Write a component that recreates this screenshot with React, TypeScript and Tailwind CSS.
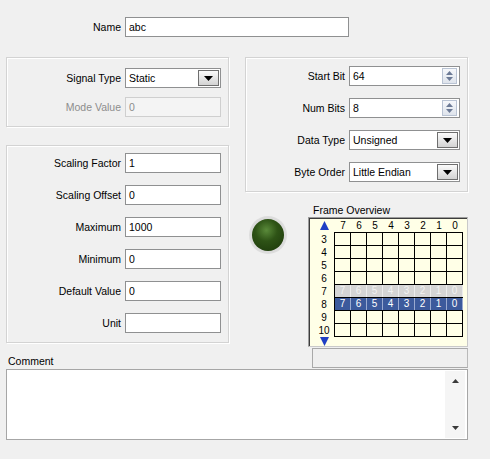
import React from "react";

const cols = [7, 6, 5, 4, 3, 2, 1, 0];
const rows = [3, 4, 5, 6, 7, 8, 9, 10];

function DownTri({ color = "#000" }: { color?: string }) {
  return (
    <svg width="9" height="5" viewBox="0 0 9 5">
      <path d="M0 0H9L4.5 5Z" fill={color} />
    </svg>
  );
}

function TextBox({ value, w, disabled }: { value: string; w: string; disabled?: boolean }) {
  return (
    <div
      className={`${w} h-[20px] flex items-center pl-[3px] border ${
        disabled ? "border-[#cfcfcf] bg-[#f4f4f4] text-[#8d8d8d]" : "border-[#8f9091] bg-white text-black"
      }`}
    >
      {value}
    </div>
  );
}

function Combo({ value, w }: { value: string; w: string }) {
  return (
    <div className={`${w} h-[20px] flex items-stretch border border-[#8f9091] bg-white p-[1px]`}>
      <div className="flex-1 flex items-center pl-[2px]">{value}</div>
      <div className="w-[21px] border border-[#6e6e6e] bg-gradient-to-b from-[#fbfbfb] to-[#d3d3d3] flex items-center justify-center">
        <DownTri />
      </div>
    </div>
  );
}

function Spinner({ value, w }: { value: string; w: string }) {
  return (
    <div className={`${w} h-[20px] flex items-stretch border border-[#8f9091] bg-white p-[1px]`}>
      <div className="flex-1 flex items-center pl-[2px]">{value}</div>
      <div className="w-[15px] mr-[1px] border border-[#b9c3d3] bg-gradient-to-b from-[#f6f8fb] to-[#dfe4ec] flex flex-col items-center justify-center gap-[2px]">
        <svg width="7" height="4" viewBox="0 0 7 4">
          <path d="M0 4H7L3.5 0Z" fill="#6c7a96" />
        </svg>
        <svg width="7" height="4" viewBox="0 0 7 4">
          <path d="M0 0H7L3.5 4Z" fill="#6c7a96" />
        </svg>
      </div>
    </div>
  );
}

function LeftRow({ label, children, disabled }: { label: string; children: React.ReactNode; disabled?: boolean }) {
  return (
    <div className="flex items-center">
      <div className={`w-[114px] text-right ${disabled ? "text-[#8d8d8d]" : "text-black"}`}>{label}</div>
      <div className="ml-[4px]">{children}</div>
    </div>
  );
}

function RightRow({ label, children }: { label: string; children: React.ReactNode }) {
  return (
    <div className="flex items-center">
      <div className="w-[99px] text-right">{label}</div>
      <div className="ml-[4px]">{children}</div>
    </div>
  );
}

const etched = "border border-[#d3d3d3] shadow-[inset_1px_1px_0_#ffffff,1px_1px_0_#ffffff]";

function FrameGrid() {
  return (
    <div className="w-[160px] h-[130px] border border-[#9c9c9c] border-r-[#c9c9c9] border-b-[#c9c9c9] flex">
      <div className="flex-1 border-t border-l border-[#3c3c3c] bg-[#ffffe7] flex flex-col text-[10px] leading-none">
        <div className="h-[13px] flex items-center">
          <div className="w-[24px] flex justify-center pl-[4px]">
            <svg width="9" height="9" viewBox="0 0 9 9">
              <path d="M0 9H9L4.5 0Z" fill="#1f3fc4" />
            </svg>
          </div>
          <div className="w-[1px]" />
          {cols.map((c) => (
            <div key={c} className="w-[16px] text-center">
              {c}
            </div>
          ))}
        </div>
        <div className="flex">
          <div className="w-[24px] pt-[1px] flex flex-col">
            {rows.map((r) => (
              <div key={r} className="h-[13px] flex items-center justify-center pl-[4px]">
                {r}
              </div>
            ))}
          </div>
          <div className="border-t border-l border-black">
            {rows.map((r) => {
              const gray = r === 7;
              const blue = r === 8;
              return (
                <div key={r} className="flex h-[13px] border-b border-black">
                  {cols.map((c) => (
                    <div
                      key={c}
                      className={`w-[16px] h-full flex items-center justify-center border-r ${
                        gray
                          ? "bg-[#d5d5d5] text-[#f2f2f2] border-r-[#ececec]"
                          : blue
                          ? "bg-[#3c5a9c] text-white border-r-[#9aaad0]"
                          : "border-r-black"
                      }`}
                    >
                      {gray || blue ? c : ""}
                    </div>
                  ))}
                </div>
              );
            })}
          </div>
        </div>
        <div className="h-[9px] flex items-start">
          <div className="w-[24px] flex justify-center pl-[4px]">
            <svg width="9" height="9" viewBox="0 0 9 9">
              <path d="M0 0H9L4.5 9Z" fill="#1f3fc4" />
            </svg>
          </div>
        </div>
      </div>
    </div>
  );
}

export default function App() {
  return (
    <div className="w-[490px] h-[459px] bg-[#f0f0f0] overflow-hidden font-['Liberation_Sans',Arial,sans-serif] text-[10.5px] text-black leading-[13px]">
      {/* Name */}
      <div className="pt-[17px] flex items-center">
        <div className="w-[121px] text-right">Name</div>
        <div className="ml-[4px]">
          <TextBox value="abc" w="w-[224px]" />
        </div>
      </div>

      {/* Body */}
      <div className="mt-[20px] pl-[6px] flex">
        {/* Left column */}
        <div className="w-[223px] flex flex-col">
          <div className={`h-[70px] ${etched} pt-[10px] flex flex-col gap-[9px]`}>
            <LeftRow label="Signal Type">
              <Combo value="Static" w="w-[96px]" />
            </LeftRow>
            <LeftRow label="Mode Value" disabled>
              <TextBox value="0" w="w-[96px]" disabled />
            </LeftRow>
          </div>
          <div className={`mt-[18px] h-[198px] ${etched} pt-[7px] flex flex-col gap-[12px]`}>
            <LeftRow label="Scaling Factor">
              <TextBox value="1" w="w-[96px]" />
            </LeftRow>
            <LeftRow label="Scaling Offset">
              <TextBox value="0" w="w-[96px]" />
            </LeftRow>
            <LeftRow label="Maximum">
              <TextBox value="1000" w="w-[96px]" />
            </LeftRow>
            <LeftRow label="Minimum">
              <TextBox value="0" w="w-[96px]" />
            </LeftRow>
            <LeftRow label="Default Value">
              <TextBox value="0" w="w-[96px]" />
            </LeftRow>
            <LeftRow label="Unit">
              <TextBox value="" w="w-[96px]" />
            </LeftRow>
          </div>
          <div className="mt-[11px] h-[14px] pl-[2px] flex items-center">Comment</div>
        </div>

        {/* Right column */}
        <div className="ml-[16px] w-[223px] flex flex-col">
          <div className={`h-[135px] ${etched} pt-[8px] flex flex-col gap-[12px]`}>
            <RightRow label="Start Bit">
              <Spinner value="64" w="w-[111px]" />
            </RightRow>
            <RightRow label="Num Bits">
              <Spinner value="8" w="w-[111px]" />
            </RightRow>
            <RightRow label="Data Type">
              <Combo value="Unsigned" w="w-[111px]" />
            </RightRow>
            <RightRow label="Byte Order">
              <Combo value="Little Endian" w="w-[111px]" />
            </RightRow>
          </div>
          <div className="flex">
            <div className="w-[63px]">
              <div className="mt-[24px] ml-[4px] w-[38px] h-[38px] rounded-full bg-[radial-gradient(circle,#bdbdbd_0%,#dedede_70%,#f0f0f0_100%)] flex items-center justify-center">
                <div className="w-[32px] h-[32px] rounded-full bg-[radial-gradient(circle_at_45%_35%,#5a8a3a_0%,#2e5316_40%,#1a3509_100%)]" />
              </div>
            </div>
            <div className="w-[160px] flex flex-col">
              <div className="mt-[12px] h-[13px] pl-[5px] flex items-center">Frame Overview</div>
              <FrameGrid />
              <div className="mt-[1px] ml-[4px] w-[156px] h-[20px] border border-[#a9a9a9] border-r-[#b9b9b9] bg-[#efefef]" />
            </div>
          </div>
        </div>
      </div>

      {/* Comment box */}
      <div className="mt-[1px] ml-[6px] w-[462px] h-[71px] border border-[#a6a6a6] bg-white flex justify-end p-[1px]">
        <div className="w-[20px] mr-[1px] bg-[#f5f5f5] flex flex-col items-center justify-between py-[8px]">
          <svg width="7" height="4" viewBox="0 0 7 4">
            <path d="M0 4H7L3.5 0Z" fill="#3a3a3a" />
          </svg>
          <svg width="7" height="4" viewBox="0 0 7 4">
            <path d="M0 0H7L3.5 4Z" fill="#3a3a3a" />
          </svg>
        </div>
      </div>
    </div>
  );
}
